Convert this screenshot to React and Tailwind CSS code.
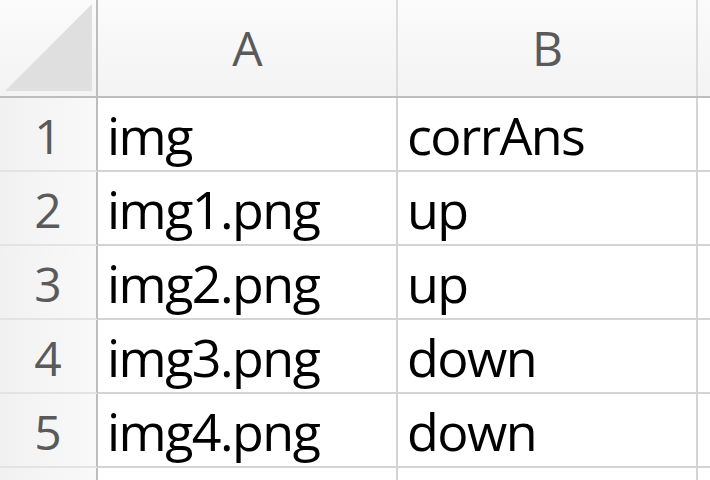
import React from 'react';

const rows = [
  ['img', 'corrAns'],
  ['img1.png', 'up'],
  ['img2.png', 'up'],
  ['img3.png', 'down'],
  ['img4.png', 'down'],
];

export default function App() {
  return (
    <div className="w-[710px] h-[480px] overflow-hidden bg-white font-['Open_Sans',sans-serif]">
      <div className="flex h-[98px] border-b-2 border-[#bdbdbd] bg-gradient-to-b from-[#fbfbfb] to-[#f3f3f3]">
        <div className="w-[98px] shrink-0 border-r-2 border-[#bdbdbd] relative">
          <svg width="96" height="96" className="absolute left-0 top-0">
            <polygon points="5,91 92,91 92,4" fill="#dfdfdf" />
          </svg>
        </div>
        {['A', 'B', ''].map((c, k) => (
          <div
            key={k}
            className="w-[300px] shrink-0 border-r-2 border-[#dcdcdc] flex items-center justify-center text-[48px] text-[#5a5a5a] tracking-[-0.02em]"
          >
            {c}
          </div>
        ))}
      </div>
      {rows.concat([['', '']]).map((r, i) => (
        <div key={i} className="flex h-[74px]">
          <div className="w-[98px] shrink-0 border-r-2 border-b-2 border-r-[#bdbdbd] border-b-[#e3e3e3] bg-gradient-to-r from-[#f1f1f1] to-[#f9f9f9] flex items-end justify-center pb-[10px] text-[48px] leading-none text-[#5a5a5a]">
            {i < 5 ? i + 1 : ''}
          </div>
          {r.concat(['']).map((t, j) => (
            <div
              key={j}
              className="w-[300px] shrink-0 border-r-2 border-b-2 border-[#d4d4d4] flex items-end pl-[9px] pb-[9px] text-[52px] leading-none text-black tracking-[-0.03em]"
            >
              {t}
            </div>
          ))}
        </div>
      ))}
    </div>
  );
}
